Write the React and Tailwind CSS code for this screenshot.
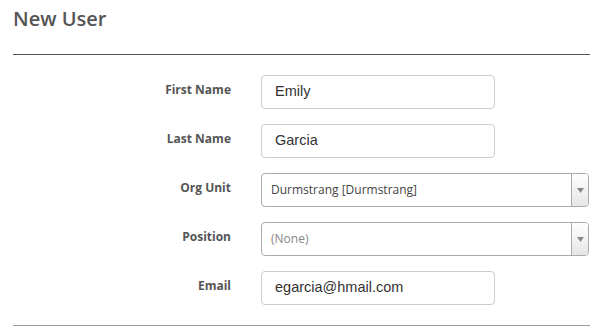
import React from "react";

function Label({ children }) {
  return (
    <div className="w-[218px] shrink-0 text-right pt-[6px] text-[12px] leading-[18px] font-bold text-[#555]">
      {children}
    </div>
  );
}

function TextInput({ value }) {
  return (
    <div className="ml-[30px] shrink-0 w-[234px] h-[34px] border border-[#ccc] rounded-[4px] bg-white flex items-center pl-[13px] text-[14.5px] text-[#333] font-['Liberation_Sans',Arial,sans-serif]">
      {value}
    </div>
  );
}

function Select({ value, muted }) {
  return (
    <div className="ml-[30px] shrink-0 w-[328px] h-[34px] border border-[#aaa] rounded-[4px] bg-white flex items-stretch overflow-hidden">
      <div className={"flex-1 flex items-center pl-[9px] text-[12px] " + (muted ? "text-[#888]" : "text-[#444]")}>
        {value}
      </div>
      <div className="w-[17px] border-l border-[#aaa] bg-gradient-to-b from-[#fff] to-[#e6e6e6] flex items-center justify-center">
        <svg width="7" height="5" viewBox="0 0 7 5">
          <path d="M0 0 L7 0 L3.5 5 Z" fill="#888" />
        </svg>
      </div>
    </div>
  );
}

export default function App() {
  return (
    <div className="w-[600px] h-[335px] bg-white font-['Open_Sans',sans-serif] overflow-hidden">
      <div className="pl-[13px] w-[590px]">
        <div className="pt-[5px] text-[20px] leading-[28px] font-semibold text-[#555]">New User</div>
        <div className="mt-[21px] h-px bg-[#555]" />
        <div className="mt-[20px] flex flex-col gap-[15px]">
          <div className="flex items-start">
            <Label>First Name</Label>
            <TextInput value="Emily" />
          </div>
          <div className="flex items-start">
            <Label>Last Name</Label>
            <TextInput value="Garcia" />
          </div>
          <div className="flex items-start">
            <Label>Org Unit</Label>
            <Select value="Durmstrang [Durmstrang]" />
          </div>
          <div className="flex items-start">
            <Label>Position</Label>
            <Select value="(None)" muted />
          </div>
          <div className="flex items-start">
            <Label>Email</Label>
            <TextInput value="egarcia@hmail.com" />
          </div>
        </div>
        <div className="mt-[20px] h-px bg-[#999]" />
      </div>
    </div>
  );
}
